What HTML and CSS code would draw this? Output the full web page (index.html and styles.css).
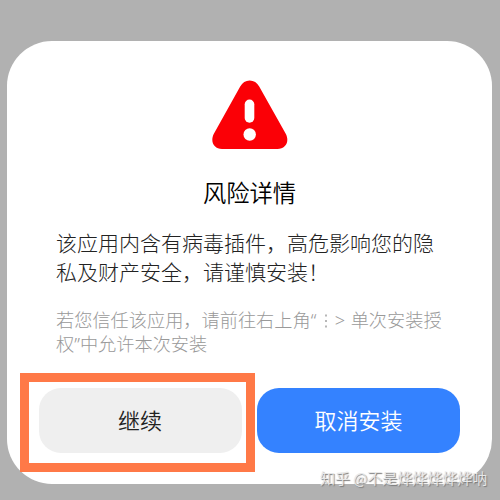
FILE: index.html
```
<!DOCTYPE html>
<html lang="zh-CN">
<head>
<meta charset="utf-8">
<title>风险详情</title>
<link rel="stylesheet" href="styles.css">
</head>
<body>
<main class="dialog">
  <svg class="warning" viewBox="0 0 76 70" aria-hidden="true">
    <path d="M28.2 6.5Q31.5 .5 37.7 .5T47.2 6.5L73.6 53.5C78 61.5 73.5 69 65.5 69H10C2 69-2.3 61.5 2 53.5Z" fill="#fb0006"/>
    <rect x="32.7" y="19.5" width="9.6" height="23.2" rx="4.8" fill="#fff"/>
    <circle cx="37.7" cy="54.5" r="6.2" fill="#fff"/>
  </svg>
  <h1 class="title">风险详情</h1>
  <p class="message">该应用内含有病毒插件，高危影响您的隐<br>私及财产安全，请谨慎安装！</p>
  <p class="hint">若您信任该应用，请前往右上角<span class="quote">“</span><svg class="more" viewBox="0 0 14 18" aria-hidden="true"><path d="M7 2.5v2M7 8v2M7 13.5v2" stroke="#a0a0a0" stroke-width="1.5"/></svg><span class="arrow">&gt;</span>单次安装授<br>权<span class="latin">”</span>中允许本次安装</p>
  <div class="actions">
    <div class="highlight"><button class="button secondary">继续</button></div>
    <button class="button primary">取消安装</button>
  </div>
</main>
<div class="watermark">知乎 @不是烨烨烨烨烨呐</div>
</body>
</html>
```
FILE: styles.css
```
* { box-sizing: border-box; }
body {
  margin: 0;
  width: 500px;
  height: 500px;
  padding: 41px 8px 0 7px;
  overflow: hidden;
  background: #b1b1b1;
  font-family: "Noto Sans CJK SC", sans-serif;
  font-weight: 300;
}
.dialog {
  height: 443px;
  padding-top: 39px;
  border-radius: 45px;
  background: #fff;
}
.warning {
  display: block;
  width: 76px;
  height: 70px;
  margin-left: 204.5px;
}
.title {
  margin: 24px 0 0;
  text-align: center;
  font-size: 23.3px;
  line-height: 36px;
  font-weight: 350;
  color: #000;
}
.message {
  margin: 18px 0 0 49px;
  font-size: 21px;
  line-height: 28.5px;
  color: #222;
  white-space: nowrap;
}
.hint {
  margin: 22px 0 0 49px;
  font-size: 18.2px;
  line-height: 24px;
  color: #999;
  white-space: nowrap;
}
.quote, .latin, .arrow { font-family: "Noto Sans", sans-serif; line-height: 1; }
.quote, .arrow { display: inline-block; }
.quote { width: 8px; }
.more { width: 14px; height: 18px; margin-right: 2px; vertical-align: -3px; }
.arrow { width: 16px; }
.actions {
  display: flex;
  align-items: flex-start;
  gap: 2px;
  margin: 18px 0 0 13px;
}
.highlight {
  width: 235px;
  height: 99px;
  padding: 5.5px 0 0 9.5px;
  border: 9px solid #ff7947;
}
.button {
  display: block;
  width: 203px;
  height: 65px;
  padding: 0 0 3px;
  border: 0;
  border-radius: 22px;
  font: inherit;
  font-size: 22px;
  font-weight: 350;
}
.secondary { background: #efefef; color: #222; }
.primary { margin-top: 14.5px; background: #3482ff; color: #fff; }
.watermark {
  position: absolute;
  left: 320px;
  top: 466px;
  font-size: 15px;
  line-height: 24px;
  font-weight: 350;
  white-space: nowrap;
  color: #e8e8e8;
  text-shadow: 1px 1px 1px #777;
}
```
